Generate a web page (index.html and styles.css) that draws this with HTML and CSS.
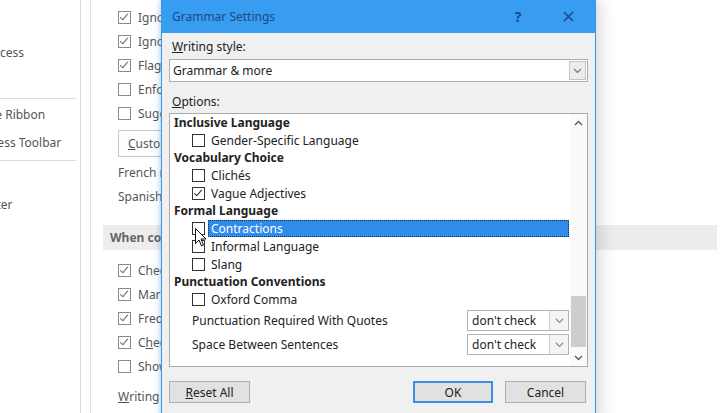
FILE: index.html
```html
<!DOCTYPE html>
<html lang="en">
<head>
    <meta charset="UTF-8">
    <title>Word Options - Grammar Settings</title>
    <link rel="stylesheet" href="styles.css">
</head>
<body>
    <div class="window">
        <nav class="sidebar">
            <div class="nav-item">Language</div>
            <div class="nav-item">Ease of Access</div>
            <div class="nav-item">Advanced</div>
            <div class="nav-sep"></div>
            <div class="nav-item">Customize Ribbon</div>
            <div class="nav-item">Quick Access Toolbar</div>
            <div class="nav-sep"></div>
            <div class="nav-item">Add-ins</div>
            <div class="nav-item">Trust Center</div>
        </nav>

        <main class="pane">
            <div class="opt"><span class="cb checked"></span>Ignore words in UPPERCASE</div>
            <div class="opt"><span class="cb checked"></span>Ignore words that contain numbers</div>
            <div class="opt"><span class="cb checked"></span>Flag repeated words</div>
            <div class="opt"><span class="cb"></span>Enforce accented uppercase in French</div>
            <div class="opt"><span class="cb"></span>Suggest from main dictionary only</div>
            <button class="pane-btn"><u>C</u>ustom Dictionaries...</button>
            <div class="opt plain">French modes:</div>
            <div class="opt plain">Spanish modes:</div>
            <div class="section-head">When correcting spelling and grammar in Word</div>
            <div class="opt"><span class="cb checked"></span>Check spelling as you type</div>
            <div class="opt"><span class="cb checked"></span>Mark grammar errors as you type</div>
            <div class="opt"><span class="cb checked"></span>Frequently confused words</div>
            <div class="opt"><span class="cb checked"></span>C<u>h</u>eck grammar with spelling</div>
            <div class="opt"><span class="cb"></span>Show readability statistics</div>
            <div class="opt plain last"><u>W</u>riting Style:</div>
        </main>

        <div class="dialog">
            <div class="titlebar">
                <span class="title">Grammar Settings</span>
                <span class="tb-btn help">?</span>
                <span class="tb-btn close">
                    <svg width="11" height="11" viewBox="0 0 11 11"><path d="M1 1L10 10M10 1L1 10" stroke="#1c4a86" stroke-width="1.6"/></svg>
                </span>
            </div>
            <div class="dlg-body">
                <div class="label"><u>W</u>riting style:</div>
                <div class="combo">
                    <span class="combo-text">Grammar &amp; more</span>
                    <span class="combo-arrow"><svg width="9" height="6" viewBox="0 0 9 6"><path d="M1 1l3.5 3.5L8 1" fill="none" stroke="#777" stroke-width="1.2"/></svg></span>
                </div>
                <div class="label options-label"><u>O</u>ptions:</div>
                <div class="listbox">
                    <div class="list">
                        <div class="group">Inclusive Language</div>
                        <div class="item"><span class="cb dark"></span><span class="item-text">Gender-Specific Language</span></div>
                        <div class="group">Vocabulary Choice</div>
                        <div class="item"><span class="cb dark"></span><span class="item-text">Clichés</span></div>
                        <div class="item"><span class="cb dark checked"></span><span class="item-text">Vague Adjectives</span></div>
                        <div class="group">Formal Language</div>
                        <div class="item selected"><span class="cb dark"></span><span class="item-text">Contractions</span></div>
                        <div class="item"><span class="cb dark"></span><span class="item-text">Informal Language</span></div>
                        <div class="item"><span class="cb dark"></span><span class="item-text">Slang</span></div>
                        <div class="group">Punctuation Conventions</div>
                        <div class="item"><span class="cb dark"></span><span class="item-text">Oxford Comma</span></div>
                        <div class="item pick">
                            <span class="item-text">Punctuation Required With Quotes</span>
                            <span class="mini-combo">don't check<span class="mini-arrow"><svg width="9" height="6" viewBox="0 0 9 6"><path d="M1 1l3.5 3.5L8 1" fill="none" stroke="#888" stroke-width="1.2"/></svg></span></span>
                        </div>
                        <div class="item pick">
                            <span class="item-text">Space Between Sentences</span>
                            <span class="mini-combo">don't check<span class="mini-arrow"><svg width="9" height="6" viewBox="0 0 9 6"><path d="M1 1l3.5 3.5L8 1" fill="none" stroke="#888" stroke-width="1.2"/></svg></span></span>
                        </div>
                    </div>
                    <div class="scrollbar">
                        <span class="sb-arrow"><svg width="9" height="6" viewBox="0 0 9 6"><path d="M1 5l3.5-3.5L8 5" fill="none" stroke="#555" stroke-width="1.3"/></svg></span>
                        <span class="sb-track"><span class="sb-thumb"></span></span>
                        <span class="sb-arrow"><svg width="9" height="6" viewBox="0 0 9 6"><path d="M1 1l3.5 3.5L8 1" fill="none" stroke="#555" stroke-width="1.3"/></svg></span>
                    </div>
                </div>
                <div class="buttons">
                    <button class="btn"><u>R</u>eset All</button>
                    <span class="spacer"></span>
                    <button class="btn default">OK</button>
                    <button class="btn">Cancel</button>
                </div>
            </div>
        </div>

        <svg class="cursor" width="12" height="19" viewBox="0 0 12 19">
            <path d="M0.5 0.5L0.5 15.5L4 12L6.5 18L8.5 17L6 11L11 11Z" fill="#fff" stroke="#111" stroke-width="1"/>
        </svg>
    </div>
</body>
</html>
```

FILE: styles.css
```css
body {
    margin: 0;
    font-family: "Noto Sans", "Open Sans", sans-serif;
    font-size: 12px;
    color: #333;
    background: #fff;
}

.window {
    position: relative;
    width: 720px;
    height: 413px;
    overflow: hidden;
    display: flex;
}

/* left navigation of the options window */
.sidebar {
    width: 80px;
    flex-shrink: 0;
    border-right: 1px solid #d9d9d9;
    padding-top: 11px;
    overflow: hidden;
    color: #555;
}

.nav-item {
    height: 28px;
    line-height: 28px;
    white-space: nowrap;
    margin-left: -57px;
}

.nav-sep {
    height: 1px;
    background: #dcdcdc;
    margin: 3px 4px 2px 0;
}

/* options pane behind the dialog */
.pane {
    flex: 1;
    margin-left: 9px;
    border-left: 1px solid #e2e2e2;
    padding-top: 5px;
    color: #555;
}

.opt {
    height: 24.2px;
    display: flex;
    align-items: center;
    padding-left: 27px;
    white-space: nowrap;
}

.opt.plain {
    height: 24.5px;
}

.opt.last {
    margin-top: 5px;
}

.cb {
    position: relative;
    width: 11px;
    height: 11px;
    border: 1px solid #8a8a8a;
    background: #fff;
    margin-right: 7px;
    flex-shrink: 0;
}

.cb.dark {
    border-color: #333;
}

.cb.checked::after {
    content: '';
    position: absolute;
    left: 3px;
    top: 0;
    width: 3px;
    height: 7px;
    border: solid #666;
    border-width: 0 1.5px 1.5px 0;
    transform: rotate(40deg);
}

.cb.dark.checked::after {
    border-color: #222;
}

.pane-btn {
    margin: 4px 0 3px 27px;
    height: 27px;
    width: 160px;
    border: 1px solid #c8c8c8;
    background: #fdfdfd;
    font: inherit;
    color: #555;
    text-align: left;
    padding-left: 9px;
}

.section-head {
    margin: 16px 3px 8px 12px;
    height: 25px;
    line-height: 25px;
    background: #ededed;
    padding-left: 7px;
    font-weight: bold;
    color: #666;
    white-space: nowrap;
}

/* Grammar Settings dialog */
.dialog {
    position: absolute;
    left: 161px;
    top: 0;
    width: 435px;
    height: 425px;
    box-sizing: border-box;
    background: #f0f0f0;
    border: 1px solid #3b95e6;
    border-top: none;
    box-shadow: 6px 0 14px rgba(0, 0, 0, 0.13), -2px 0 4px rgba(59, 149, 230, 0.25);
    color: #222;
}

.titlebar {
    height: 33px;
    background: #389cf0;
    display: flex;
    align-items: center;
    padding-left: 10px;
    color: #1c4a86;
}

.title {
    flex: 1;
}

.tb-btn {
    display: flex;
    align-items: center;
    justify-content: center;
    height: 33px;
}

.help {
    width: 46px;
    font-size: 14px;
    font-weight: bold;
}

.close {
    width: 54px;
}

.dlg-body {
    padding: 7px 7px 0 7px;
}

.label {
    height: 14px;
    line-height: 14px;
    padding-left: 3px;
    margin-bottom: 5px;
}

.options-label {
    margin-top: 13px;
    margin-bottom: 4px;
}

.combo {
    height: 23px;
    box-sizing: border-box;
    border: 1px solid #acacac;
    background: #fff;
    display: flex;
    align-items: center;
    padding: 0 1px 0 3px;
}

.combo-text {
    flex: 1;
}

.combo-arrow {
    width: 17px;
    height: 19px;
    box-sizing: border-box;
    border: 1px solid #c4c4c4;
    background: #ececec;
    display: flex;
    align-items: center;
    justify-content: center;
}

.listbox {
    height: 254px;
    box-sizing: border-box;
    border: 1px solid #aaa;
    background: #fff;
    display: flex;
}

.list {
    flex: 1;
    padding-right: 1px;
}

.group {
    height: 17.7px;
    line-height: 17.7px;
    padding-left: 4px;
    font-weight: bold;
    white-space: nowrap;
}

.item {
    height: 17.7px;
    display: flex;
    align-items: center;
    padding-left: 22px;
    white-space: nowrap;
}

.item .cb {
    margin-right: 3px;
}

.item-text {
    flex: 1;
    height: 17px;
    line-height: 17px;
    padding-left: 3px;
}

.item.selected .item-text {
    background: #2f8cea;
    color: #fff;
    outline: 1px dotted #1a2a40;
    outline-offset: -1px;
}

.item.pick {
    height: 24px;
    padding-right: 0;
}

.item.pick .item-text {
    padding-left: 0;
}

.mini-combo {
    width: 102px;
    height: 21px;
    box-sizing: border-box;
    border: 1px solid #b4b4b4;
    background: #fff;
    display: flex;
    align-items: center;
    padding-left: 4px;
}

.mini-arrow {
    margin-left: auto;
    width: 18px;
    height: 19px;
    border-left: 1px solid #cfcfcf;
    background: #f4f4f4;
    display: flex;
    align-items: center;
    justify-content: center;
}

.scrollbar {
    width: 17px;
    display: flex;
    flex-direction: column;
    background: #fafafa;
}

.sb-arrow {
    height: 17px;
    display: flex;
    align-items: center;
    justify-content: center;
}

.sb-track {
    flex: 1;
    display: flex;
    flex-direction: column;
    justify-content: flex-end;
    padding-bottom: 2px;
}

.sb-thumb {
    height: 51px;
    margin: 0 1px;
    background: #cdcdcd;
}

.buttons {
    display: flex;
    margin-top: 14px;
    padding-right: 2px;
}

.spacer {
    flex: 1;
}

.btn {
    width: 81px;
    height: 22px;
    box-sizing: border-box;
    border: 1px solid #adadad;
    background: #e1e1e1;
    font: inherit;
    color: #222;
    padding: 0;
}

.btn.default {
    width: 80px;
    margin-right: 12px;
    border: 2px solid #3d8ee0;
}

.cursor {
    position: absolute;
    left: 195px;
    top: 228px;
}
```
